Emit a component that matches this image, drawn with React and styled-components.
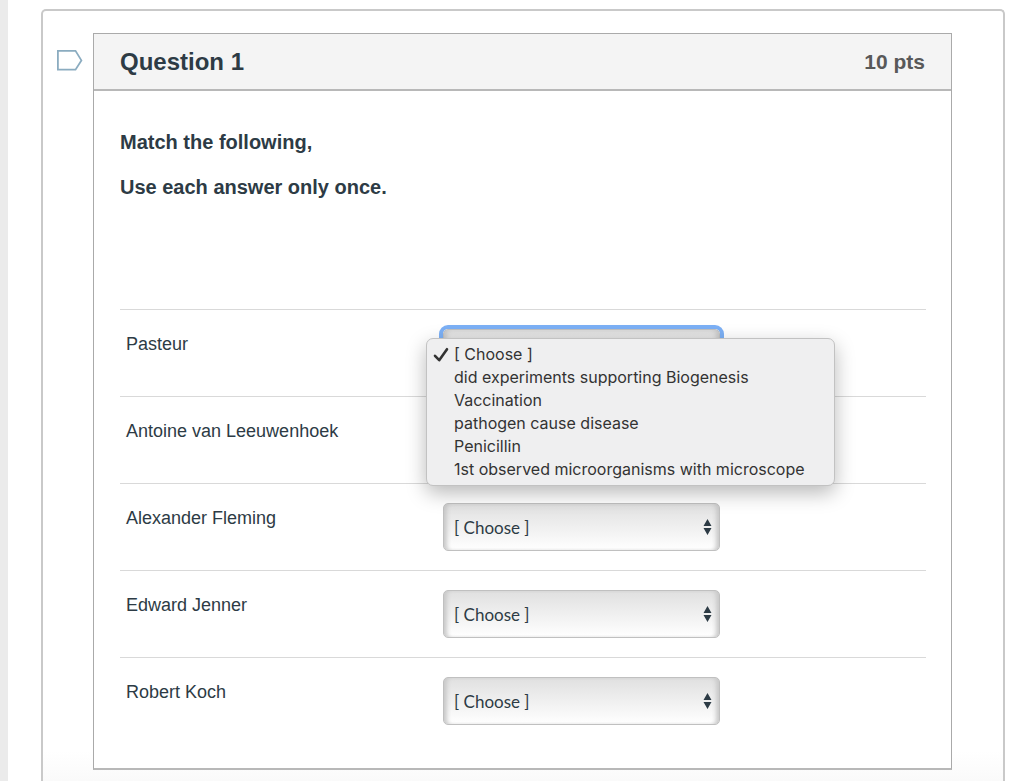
import { useState } from 'react';
import styled, { createGlobalStyle, css } from 'styled-components';

const GlobalStyle = createGlobalStyle`
	* {
		box-sizing: border-box;
	}

	body {
		margin: 0;
		background: #fff;
		color: #2d3b45;
		font-family: "Liberation Sans", Arial, sans-serif;
	}
`;

const Page = styled.div`
	display: flex;
	min-height: 100vh;
	padding: 9px 19px 0 33px;
	border-left: 8px solid #ebebeb;
`;

const Quiz = styled.main`
	flex: 1;
	display: flex;
	align-items: flex-start;
	padding: 22px 51px 11px 14px;
	border: 2px solid #c9c9c9;
	border-bottom: 0;
	border-radius: 5px 5px 0 0;
	background: linear-gradient(to top, #fafafa, #fff 30px);
`;

const FlagButton = styled.button`
	flex: none;
	width: 36px;
	height: 24px;
	margin-top: 15px;
	padding: 0;
	border: 0;
	background: none;
	text-align: left;

	svg {
		display: block;
	}
`;

const Card = styled.section`
	flex: 1;
	min-width: 0;
	border: 1px solid #aaa;
	border-bottom: 2px solid #b8b8b8;
	background: #fff;
`;

const CardHeader = styled.header`
	display: flex;
	justify-content: space-between;
	align-items: center;
	height: 57px;
	padding: 0 26px;
	background: #f4f4f4;
	border-bottom: 2px solid #b8b8b8;
`;

const Title = styled.h2`
	margin: 0;
	font-size: 24px;
	line-height: 28px;
`;

const Points = styled.span`
	color: #595959;
	font-size: 21px;
	font-weight: bold;
	line-height: 28px;
`;

const CardBody = styled.div`
	padding: 39px 25px 24px 26px;
`;

const Prompt = styled.p`
	margin: 0 0 21px;
	font-size: 20px;
	font-weight: bold;
	line-height: 24px;
`;

const Answers = styled.div`
	margin-top: 110px;
`;

const Answer = styled.div`
	display: grid;
	grid-template-columns: 323px 277px;
	align-items: start;
	height: 87px;
	padding-top: 19px;
	border-top: 1px solid #d9d9d9;
`;

const AnswerLabel = styled.label`
	padding: 5px 6px;
	font-size: 18px;
	line-height: 20px;
`;

const SelectWrap = styled.div`
	position: relative;

	> svg {
		position: absolute;
		top: 16px;
		right: 8px;
		pointer-events: none;
	}
`;

const Select = styled.select`
	display: block;
	width: 100%;
	height: 48px;
	padding: 0 28px 0 10px;
	appearance: none;
	border: 1px solid #c0c0c0;
	border-radius: 5px;
	background: linear-gradient(#e0e0e0, #fff);
	box-shadow: inset 5px 0 4px -2px #c9c9c9, inset -5px 0 4px -2px #c9c9c9;
	color: #2d3b45;
	font-family: Lato, sans-serif;
	font-size: 17px;
	outline: none;

	${(props) => props.$open && css`
		box-shadow: 0 0 0 4px #7cb0f5, inset 5px 0 4px -2px #c9c9c9, inset -5px 0 4px -2px #c9c9c9;
	`}
`;

const Menu = styled.ul`
	position: absolute;
	z-index: 1;
	top: 9px;
	left: -17px;
	width: 409px;
	margin: 0;
	padding: 4px 0;
	list-style: none;
	border: 1px solid #c2c2c2;
	border-radius: 7px;
	background: #efeff0;
	box-shadow: 0 7px 20px rgba(0, 0, 0, 0.28);
`;

const MenuItem = styled.button`
	display: flex;
	align-items: center;
	width: 100%;
	height: 23px;
	padding: 0 6px;
	border: 0;
	background: none;
	color: #333;
	font-family: Inter, sans-serif;
	font-size: 16px;
	line-height: 23px;
	white-space: nowrap;
`;

const Tick = styled.span`
	flex: none;
	width: 21px;

	svg {
		display: block;
	}
`;

const people = [
	'Pasteur',
	'Antoine van Leeuwenhoek',
	'Alexander Fleming',
	'Edward Jenner',
	'Robert Koch',
];

const choices = [
	'[ Choose ]',
	'did experiments supporting Biogenesis',
	'Vaccination',
	'pathogen cause disease',
	'Penicillin',
	'1st observed microorganisms with microscope',
];

const FlagIcon = () => (
	<svg width='27' height='24' viewBox='0 0 27 24' fill='none' stroke='#8bacc0' strokeWidth='1.8'>
		<path d='M0.9 2.9H18.5L24.4 12.4L18.5 21.7H0.9Z' />
	</svg>
);

const ArrowsIcon = () => (
	<svg width='9' height='16' viewBox='0 0 9 16' fill='#2d3b45'>
		<path d='M4.5 0L8.5 7H0.5ZM4.5 16L0.5 9H8.5Z' />
	</svg>
);

const TickIcon = () => (
	<svg width='16' height='16' viewBox='0 0 16 16' fill='none' stroke='#333' strokeWidth='2.6'>
		<path d='M2 8.8L6.2 13.2L14 2.2' strokeLinecap='round' strokeLinejoin='round' />
	</svg>
);

const App = () => {
	const [values, setValues] = useState(people.map(() => choices[0]));
	const [open, setOpen] = useState(0);

	const choose = (index, value) => {
		setValues(values.map((old, i) => (i === index ? value : old)));
		setOpen(null);
	};

	return (
		<Page>
			<GlobalStyle />
			<Quiz>
				<FlagButton type='button' aria-label='Flag question'>
					<FlagIcon />
				</FlagButton>
				<Card>
					<CardHeader>
						<Title>Question 1</Title>
						<Points>10 pts</Points>
					</CardHeader>
					<CardBody>
						<Prompt>Match the following,</Prompt>
						<Prompt>Use each answer only once.</Prompt>
						<Answers>
							{people.map((person, index) => (
								<Answer key={person}>
									<AnswerLabel htmlFor={`answer-${index}`}>{person}</AnswerLabel>
									<SelectWrap>
										<Select
											id={`answer-${index}`}
											$open={open === index}
											value={values[index]}
											onChange={(e) => choose(index, e.target.value)}
										>
											{choices.map((choice) => <option key={choice}>{choice}</option>)}
										</Select>
										<ArrowsIcon />
										{open === index && (
											<Menu>
												{choices.map((choice) => (
													<li key={choice}>
														<MenuItem type='button' onClick={() => choose(index, choice)}>
															<Tick>{values[index] === choice && <TickIcon />}</Tick>
															{choice}
														</MenuItem>
													</li>
												))}
											</Menu>
										)}
									</SelectWrap>
								</Answer>
							))}
						</Answers>
					</CardBody>
				</Card>
			</Quiz>
		</Page>
	);
};

export default App;
